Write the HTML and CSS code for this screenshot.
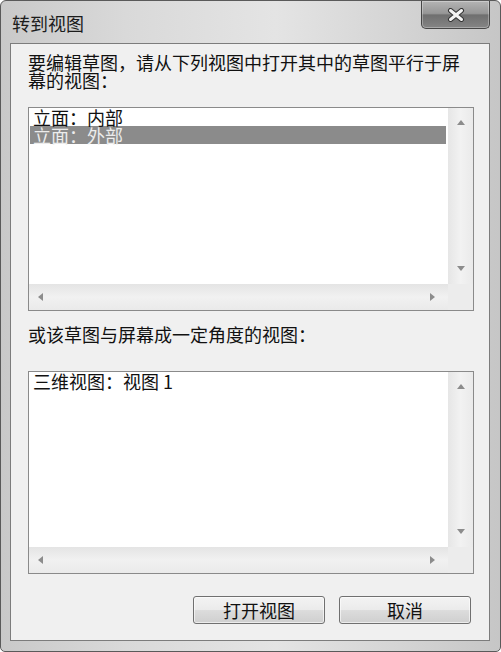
FILE: index.html
```
<!DOCTYPE html>
<html lang="zh">
<head>
  <meta charset="UTF-8">
  <title>转到视图</title>
  <link rel="stylesheet" href="styles.css">
</head>
<body>
  <div class="window">
    <div class="titlebar">
      <span class="title">转到视图</span>
      <button class="close" aria-label="关闭">
        <svg width="18" height="14" viewBox="0 0 18 14">
          <path d="M3.5 2.5 L14.5 11.5 M14.5 2.5 L3.5 11.5" stroke="#333" stroke-width="5" stroke-linecap="round"/>
          <path d="M3.5 2.5 L14.5 11.5 M14.5 2.5 L3.5 11.5" stroke="#f4f4f4" stroke-width="3" stroke-linecap="round"/>
        </svg>
      </button>
    </div>

    <div class="client">
      <p class="label">要编辑草图，请从下列视图中打开其中的草图平行于屏幕的视图：</p>

      <div class="listbox list-one">
        <ul class="items">
          <li>立面：内部</li>
          <li class="selected">立面：外部</li>
        </ul>
        <div class="vscroll"><span class="arrow up"></span><span class="arrow down"></span></div>
        <div class="hscroll"><span class="arrow left"></span><span class="arrow right"></span></div>
        <div class="corner"></div>
      </div>

      <p class="label label-mid">或该草图与屏幕成一定角度的视图：</p>

      <div class="listbox list-two">
        <ul class="items">
          <li>三维视图：视图 1</li>
        </ul>
        <div class="vscroll"><span class="arrow up"></span><span class="arrow down"></span></div>
        <div class="hscroll"><span class="arrow left"></span><span class="arrow right"></span></div>
        <div class="corner"></div>
      </div>

      <div class="buttons">
        <button class="btn">打开视图</button>
        <button class="btn">取消</button>
      </div>
    </div>
  </div>
</body>
</html>
```

FILE: styles.css
```
body { margin: 0; background: #fff; font-family: "Noto Sans CJK SC", "Liberation Sans", sans-serif; color: #111; }

.window {
  width: 501px; height: 652px; box-sizing: border-box;
  border: 1px solid #5a5a5a; border-radius: 6px 6px 5px 5px;
  background: linear-gradient(to right, #c9c9c9, #d9d9d9 25%, #e4e4e4 55%, #d4d4d4 80%, #c6c6c6);
  display: flex; flex-direction: column;
  padding: 0 10px 10px 9px;
}

.titlebar { height: 42px; display: flex; align-items: flex-start; }
.title { font-size: 18px; line-height: 18px; padding: 13px 0 0 2px; color: #1c1c1c; }
.close {
  margin-left: auto; width: 69px; height: 28px; padding: 0;
  border: 1px solid #474747; border-top: none; border-radius: 0 0 5px 5px;
  background: linear-gradient(#b4b4b4, #969696 46%, #6f6f6f 52%, #858585);
  box-shadow: inset 0 0 0 1px rgba(255,255,255,0.3);
  display: flex; align-items: center; justify-content: center;
}

.client {
  flex: 1; border: 1px solid #7c7c7c; background: #f0f0f0;
  padding: 9px 15px 16px 17px;
  display: flex; flex-direction: column;
}

.label { margin: 0; font-size: 18px; line-height: 18px; }
.label-mid { margin-top: 14px; }

.listbox {
  display: grid; grid-template-columns: 1fr 25px; grid-template-rows: 1fr 26px;
  border: 1px solid #8a8a8a; background: #fff; box-sizing: border-box;
}
.list-one { height: 204px; margin-top: 18px; }
.list-two { height: 203px; margin-top: 28px; }

.items { list-style: none; margin: 0; padding: 0 2px 0 1px; font-size: 18px; line-height: 18px; }
.items li { padding-left: 3px; white-space: nowrap; }
.items .selected { background: #8b8b8b; color: #ececec; }

.vscroll {
  background: linear-gradient(to right, #e6e6e6, #f2f2f2 50%, #eaeaea);
  display: flex; flex-direction: column; justify-content: space-between; align-items: center;
  padding: 12px 0 13px;
}
.hscroll {
  background: linear-gradient(#e4e4e4, #f1f1f1 50%, #eaeaea);
  display: flex; justify-content: space-between; align-items: center;
  padding: 0 13px 0 9px;
}
.corner { background: #ececec; }

.arrow { width: 0; height: 0; border: 0 solid transparent; }
.arrow.up { border-width: 0 4.5px 5px; border-bottom-color: #8c8c8c; }
.arrow.down { border-width: 5px 4.5px 0; border-top-color: #8c8c8c; }
.arrow.left { border-width: 4.5px 5px 4.5px 0; border-right-color: #8c8c8c; }
.arrow.right { border-width: 4.5px 0 4.5px 5px; border-left-color: #8c8c8c; }

.buttons { display: flex; justify-content: flex-end; gap: 14px; margin-top: 22px; padding-right: 3px; }
.btn {
  width: 132px; height: 28px; padding: 0;
  font-family: inherit; font-size: 18px; line-height: 18px; color: #111;
  border: 1px solid #707070; border-radius: 3px;
  background: linear-gradient(#f3f3f3, #ebebeb 48%, #dcdcdc 52%, #cfcfcf);
  box-shadow: inset 0 0 0 1px rgba(255,255,255,0.6);
}
```
